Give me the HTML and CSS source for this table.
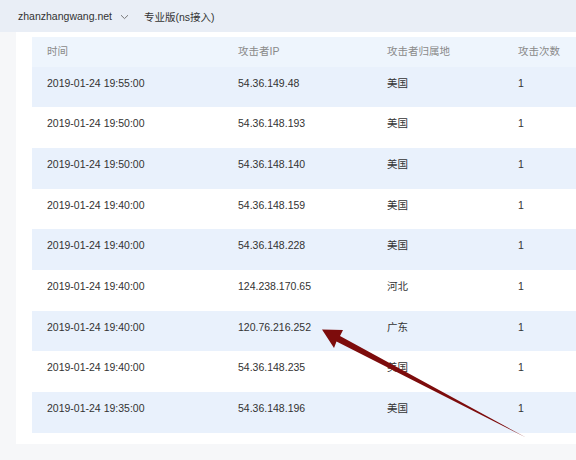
FILE: index.html
```html
<!DOCTYPE html>
<html lang="zh-CN">
<head>
<meta charset="utf-8">
<link rel="stylesheet" href="styles.css">
</head>
<body>
<div class="page">
  <div class="topbar">
    <span class="domain">zhanzhangwang.net</span>
    <svg class="chev" width="9" height="6" viewBox="0 0 9 6"><path d="M1 1.2 L4.5 4.6 L8 1.2" fill="none" stroke="#777" stroke-width="1"/></svg>
    <span class="plan">专业版(ns接入)</span>
  </div>
  <div class="content">
    <div class="card">
      <div class="table">
        <div class="row head">
          <div>时间</div><div>攻击者IP</div><div>攻击者归属地</div><div>攻击次数</div>
        </div>
        <div class="row odd"><div>2019-01-24 19:55:00</div><div>54.36.149.48</div><div>美国</div><div>1</div></div>
        <div class="row"><div>2019-01-24 19:50:00</div><div>54.36.148.193</div><div>美国</div><div>1</div></div>
        <div class="row odd"><div>2019-01-24 19:50:00</div><div>54.36.148.140</div><div>美国</div><div>1</div></div>
        <div class="row"><div>2019-01-24 19:40:00</div><div>54.36.148.159</div><div>美国</div><div>1</div></div>
        <div class="row odd"><div>2019-01-24 19:40:00</div><div>54.36.148.228</div><div>美国</div><div>1</div></div>
        <div class="row"><div>2019-01-24 19:40:00</div><div>124.238.170.65</div><div>河北</div><div>1</div></div>
        <div class="row odd"><div>2019-01-24 19:40:00</div><div>120.76.216.252</div><div>广东</div><div>1</div></div>
        <div class="row"><div>2019-01-24 19:40:00</div><div>54.36.148.235</div><div>美国</div><div>1</div></div>
        <div class="row odd"><div>2019-01-24 19:35:00</div><div>54.36.148.196</div><div>美国</div><div>1</div></div>
      </div>
    </div>
  </div>
  <svg class="arrow" width="576" height="460" viewBox="0 0 576 460">
    <polygon points="322,329.5 343,330 340,336 526,437.5 336.5,341.5 334,348" fill="#7d0c0c"/>
  </svg>
</div>
</body>
</html>
```
FILE: styles.css
```css
* { box-sizing: border-box; }
html, body { margin: 0; padding: 0; }
body {
  width: 576px;
  height: 460px;
  overflow: hidden;
  background: #f6f7f9;
  font-family: "Liberation Sans", "Noto Sans CJK SC", sans-serif;
  font-size: 10.5px;
  color: #333;
}
.page { position: relative; width: 576px; height: 460px; overflow: hidden; }
.topbar {
  height: 32px;
  background: #e9eef6;
  display: flex;
  align-items: center;
  padding-left: 18px;
  color: #333;
}
.chev { margin-left: 8px; margin-top: 1px; }
.plan { margin-left: 15px; }
.content { padding-left: 16px; }
.card {
  background: #fff;
  padding: 5px 0 11px 16px;
}
.table { overflow: hidden; }
.row {
  display: grid;
  grid-template-columns: 191px 149px 131px 1fr;
  height: 40.7px;
  padding-top: 8px;
  line-height: 16px;
  padding-left: 15px;
}
.row.odd { background: #e9f1fc; }
.row.head {
  height: 29.5px;
  padding-top: 0;
  line-height: 29.5px;
  background: #eef5fd;
  color: #8a8a8a;
}
.arrow { position: absolute; left: 0; top: 0; pointer-events: none; }
```
